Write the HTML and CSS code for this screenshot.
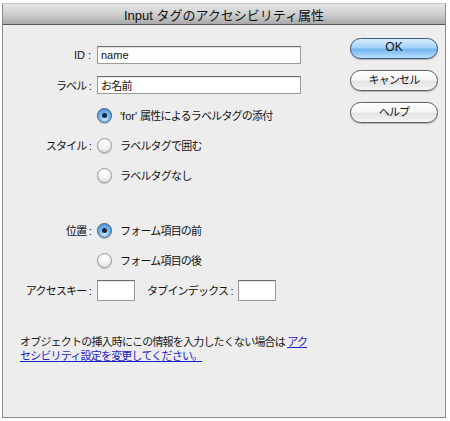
FILE: index.html
```html
<!DOCTYPE html>
<html lang="ja">
<head>
<meta charset="utf-8">
<title>Input タグのアクセシビリティ属性</title>
<link rel="stylesheet" href="styles.css">
</head>
<body>
<div class="window">
  <div class="titlebar"><span class="title">Input タグのアクセシビリティ属性</span></div>
  <div class="content">
    <div class="form">
      <div class="row">
        <span class="lbl">ID :</span>
        <span class="field wide">name</span>
      </div>
      <div class="row">
        <span class="lbl jp">ラベル :</span>
        <span class="field wide jp">お名前</span>
      </div>
      <div class="row">
        <span class="lbl"></span>
        <span class="radio on"></span>
        <span class="opt"><span class="latin">'for'</span> <span class="jp">属性によるラベルタグの添付</span></span>
      </div>
      <div class="row">
        <span class="lbl jp">スタイル :</span>
        <span class="radio"></span>
        <span class="opt jp">ラベルタグで囲む</span>
      </div>
      <div class="row">
        <span class="lbl"></span>
        <span class="radio"></span>
        <span class="opt jp">ラベルタグなし</span>
      </div>
      <div class="spacer"></div>
      <div class="row">
        <span class="lbl jp">位置 :</span>
        <span class="radio on"></span>
        <span class="opt jp">フォーム項目の前</span>
      </div>
      <div class="row">
        <span class="lbl"></span>
        <span class="radio"></span>
        <span class="opt jp">フォーム項目の後</span>
      </div>
      <div class="row">
        <span class="lbl jp">アクセスキー :</span>
        <span class="field small"></span>
        <span class="lbl2 jp">タブインデックス :</span>
        <span class="field small"></span>
      </div>
      <p class="note jp">オブジェクトの挿入時にこの情報を入力したくない場合は <a href="#" class="link">アク<br>セシビリティ設定を変更してください。</a></p>
    </div>
    <div class="buttons">
      <span class="btn default">OK</span>
      <span class="btn jp">キャンセル</span>
      <span class="btn jp">ヘルプ</span>
    </div>
  </div>
</div>
</body>
</html>
```

FILE: styles.css
```css
html, body {
  margin: 0;
  padding: 0;
  background: #ffffff;
}
body {
  font-family: "Liberation Sans", "Noto Sans CJK JP", sans-serif;
  font-size: 11px;
  color: #111;
}
.jp {
  letter-spacing: -0.8px;
}
.latin {
  letter-spacing: 0;
}
.window {
  margin: 3px 0 0 2px;
  width: 444px;
  height: 415px;
  box-sizing: border-box;
  border: 1px solid #8a8a8a;
  border-top: 1px solid #c8c8c8;
  background: #ededed;
  display: flex;
  flex-direction: column;
}
.titlebar {
  height: 20px;
  border-bottom: 1px solid #555;
  background: linear-gradient(#e6e6e6, #cfcfcf 50%, #a9a9a9);
  display: flex;
  align-items: center;
  justify-content: center;
}
.title {
  font-size: 13px;
  color: #111;
  padding-top: 1px;
}
.content {
  flex: 1;
  display: flex;
}
.form {
  flex: 1;
  padding-top: 15px;
  display: flex;
  flex-direction: column;
}
.row {
  height: 30px;
  display: flex;
  align-items: center;
}
.lbl {
  width: 88px;
  margin-right: 6px;
  text-align: right;
  white-space: nowrap;
}
.field {
  box-sizing: border-box;
  background: #fff;
  border: 1px solid #9a9a9a;
  border-top-color: #6f6f6f;
  box-shadow: inset 0 1px 1px rgba(0,0,0,0.12);
  display: flex;
  align-items: center;
  padding-left: 3px;
  font-size: 11px;
}
.wide {
  width: 204px;
  height: 18px;
}
.small {
  width: 38px;
  height: 21px;
}
.lbl2 {
  margin-left: 12px;
  margin-right: 5px;
  white-space: nowrap;
}
.radio {
  box-sizing: border-box;
  width: 15px;
  height: 15px;
  border-radius: 50%;
  border: 1px solid #9a9a9a;
  background: radial-gradient(circle at 50% 30%, #ffffff 0%, #f4f4f4 45%, #d6d6d6 100%);
  box-shadow: 0 1px 1px rgba(0,0,0,0.2);
  margin-right: 8px;
  position: relative;
  flex: none;
}
.radio.on {
  border-color: #3e5d86;
  background: radial-gradient(circle at 50% 75%, #c8e8ff 0%, #7fbcef 40%, #3d86d6 100%);
}
.radio.on::after {
  content: "";
  position: absolute;
  left: 4px;
  top: 4px;
  width: 5px;
  height: 5px;
  border-radius: 50%;
  background: #17263a;
}
.opt {
  white-space: nowrap;
}
.spacer {
  height: 25px;
}
.note {
  margin: 30px 0 0 17px;
  line-height: 14px;
  color: #1a1a1a;
}
.link {
  color: #1d1dc8;
  text-decoration: underline;
}
.buttons {
  width: 88px;
  margin-right: 7px;
  padding-top: 13px;
  display: flex;
  flex-direction: column;
  gap: 11px;
}
.btn {
  box-sizing: border-box;
  height: 21px;
  border-radius: 11px;
  border: 1px solid #5e5e5e;
  background: linear-gradient(#ffffff, #f6f6f6 45%, #e3e3e3 55%, #f4f4f4);
  box-shadow: 0 1px 1px rgba(0,0,0,0.25);
  display: flex;
  align-items: center;
  justify-content: center;
  font-size: 11px;
  padding-bottom: 3px;
}
.btn.default {
  border-color: #39577f;
  background: linear-gradient(#d9eefe, #a5d2f7 45%, #74b6ee 55%, #b8e0fc);
  font-size: 12px;
}
```
